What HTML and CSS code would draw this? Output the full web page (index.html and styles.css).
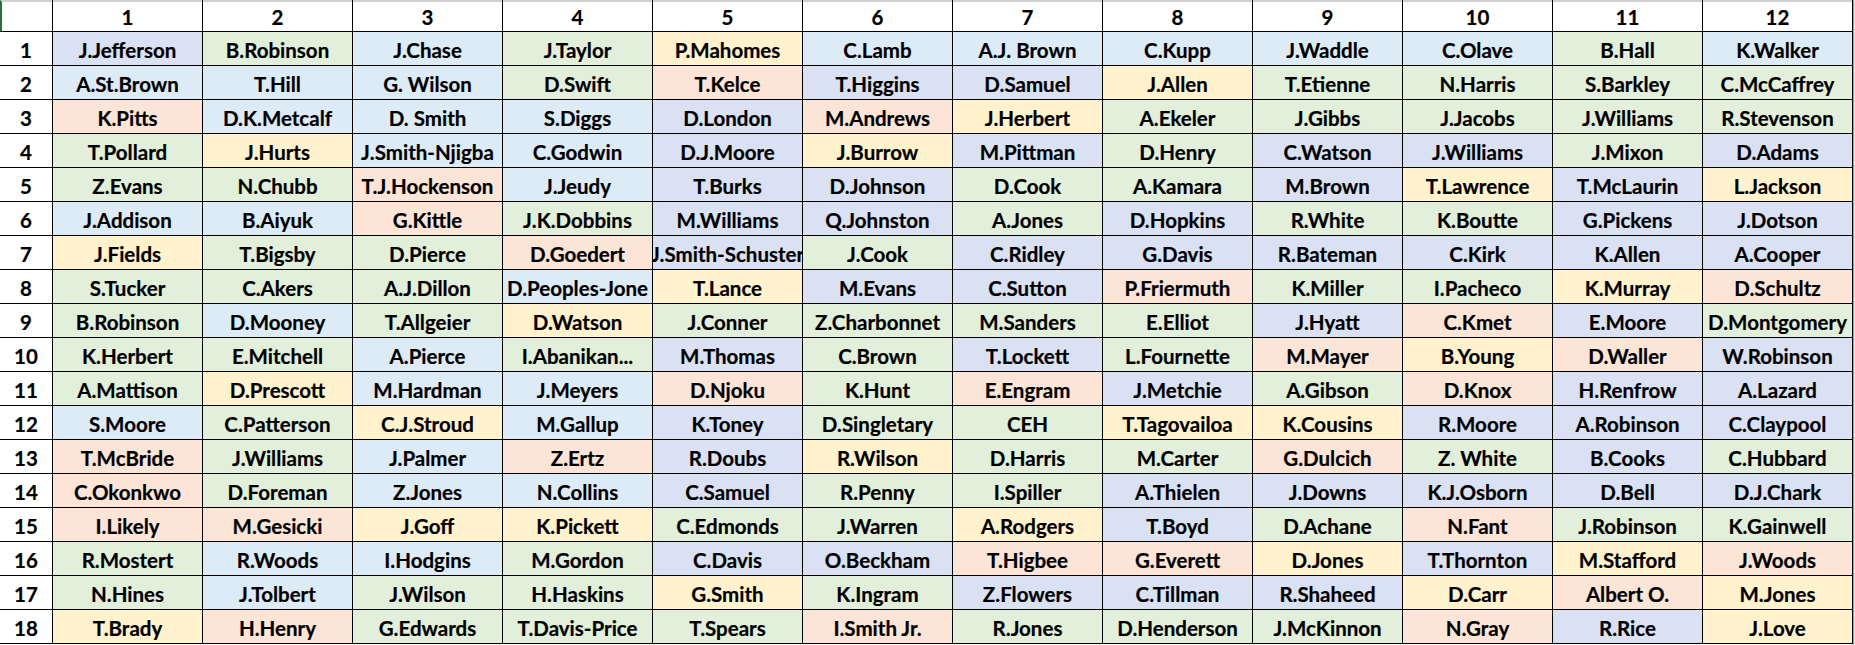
FILE: index.html
```html
<!DOCTYPE html>
<html>
<head>
<meta charset="utf-8">
<link rel="stylesheet" href="styles.css">
</head>
<body>
<div class="wrap">
<div class="sheet">
<div class="c h corner"></div><div class="c h">1</div><div class="c h">2</div><div class="c h">3</div><div class="c h">4</div><div class="c h">5</div><div class="c h">6</div><div class="c h">7</div><div class="c h">8</div><div class="c h">9</div><div class="c h">10</div><div class="c h">11</div><div class="c h">12</div>
<div class="c rh">1</div><div class="c p">J.Jefferson</div><div class="c g">B.Robinson</div><div class="c b">J.Chase</div><div class="c g">J.Taylor</div><div class="c y">P.Mahomes</div><div class="c b">C.Lamb</div><div class="c b">A.J. Brown</div><div class="c b">C.Kupp</div><div class="c b">J.Waddle</div><div class="c b">C.Olave</div><div class="c g">B.Hall</div><div class="c b">K.Walker</div>
<div class="c rh">2</div><div class="c b">A.St.Brown</div><div class="c b">T.Hill</div><div class="c b">G. Wilson</div><div class="c g">D.Swift</div><div class="c o">T.Kelce</div><div class="c p">T.Higgins</div><div class="c p">D.Samuel</div><div class="c y">J.Allen</div><div class="c g">T.Etienne</div><div class="c g">N.Harris</div><div class="c g">S.Barkley</div><div class="c g">C.McCaffrey</div>
<div class="c rh">3</div><div class="c o">K.Pitts</div><div class="c b">D.K.Metcalf</div><div class="c b">D. Smith</div><div class="c b">S.Diggs</div><div class="c p">D.London</div><div class="c o">M.Andrews</div><div class="c y">J.Herbert</div><div class="c g">A.Ekeler</div><div class="c g">J.Gibbs</div><div class="c g">J.Jacobs</div><div class="c g">J.Williams</div><div class="c g">R.Stevenson</div>
<div class="c rh">4</div><div class="c g">T.Pollard</div><div class="c y">J.Hurts</div><div class="c b">J.Smith-Njigba</div><div class="c b">C.Godwin</div><div class="c p">D.J.Moore</div><div class="c y">J.Burrow</div><div class="c p">M.Pittman</div><div class="c g">D.Henry</div><div class="c p">C.Watson</div><div class="c p">J.Williams</div><div class="c g">J.Mixon</div><div class="c p">D.Adams</div>
<div class="c rh">5</div><div class="c g">Z.Evans</div><div class="c g">N.Chubb</div><div class="c o">T.J.Hockenson</div><div class="c b">J.Jeudy</div><div class="c p">T.Burks</div><div class="c p">D.Johnson</div><div class="c g">D.Cook</div><div class="c g">A.Kamara</div><div class="c p">M.Brown</div><div class="c y">T.Lawrence</div><div class="c p">T.McLaurin</div><div class="c y">L.Jackson</div>
<div class="c rh">6</div><div class="c b">J.Addison</div><div class="c b">B.Aiyuk</div><div class="c o">G.Kittle</div><div class="c g">J.K.Dobbins</div><div class="c p">M.Williams</div><div class="c p">Q.Johnston</div><div class="c g">A.Jones</div><div class="c p">D.Hopkins</div><div class="c g">R.White</div><div class="c g">K.Boutte</div><div class="c p">G.Pickens</div><div class="c p">J.Dotson</div>
<div class="c rh">7</div><div class="c y">J.Fields</div><div class="c g">T.Bigsby</div><div class="c g">D.Pierce</div><div class="c o">D.Goedert</div><div class="c p">J.Smith-Schuster</div><div class="c g">J.Cook</div><div class="c p">C.Ridley</div><div class="c p">G.Davis</div><div class="c p">R.Bateman</div><div class="c p">C.Kirk</div><div class="c p">K.Allen</div><div class="c p">A.Cooper</div>
<div class="c rh">8</div><div class="c g">S.Tucker</div><div class="c g">C.Akers</div><div class="c g">A.J.Dillon</div><div class="c b">D.Peoples-Jone</div><div class="c y">T.Lance</div><div class="c p">M.Evans</div><div class="c p">C.Sutton</div><div class="c o">P.Friermuth</div><div class="c g">K.Miller</div><div class="c g">I.Pacheco</div><div class="c y">K.Murray</div><div class="c o">D.Schultz</div>
<div class="c rh">9</div><div class="c g">B.Robinson</div><div class="c b">D.Mooney</div><div class="c g">T.Allgeier</div><div class="c y">D.Watson</div><div class="c g">J.Conner</div><div class="c g">Z.Charbonnet</div><div class="c g">M.Sanders</div><div class="c g">E.Elliot</div><div class="c p">J.Hyatt</div><div class="c o">C.Kmet</div><div class="c p">E.Moore</div><div class="c g">D.Montgomery</div>
<div class="c rh">10</div><div class="c g">K.Herbert</div><div class="c g">E.Mitchell</div><div class="c b">A.Pierce</div><div class="c g">I.Abanikan...</div><div class="c p">M.Thomas</div><div class="c g">C.Brown</div><div class="c p">T.Lockett</div><div class="c g">L.Fournette</div><div class="c o">M.Mayer</div><div class="c y">B.Young</div><div class="c o">D.Waller</div><div class="c p">W.Robinson</div>
<div class="c rh">11</div><div class="c g">A.Mattison</div><div class="c y">D.Prescott</div><div class="c b">M.Hardman</div><div class="c b">J.Meyers</div><div class="c o">D.Njoku</div><div class="c g">K.Hunt</div><div class="c o">E.Engram</div><div class="c p">J.Metchie</div><div class="c g">A.Gibson</div><div class="c o">D.Knox</div><div class="c p">H.Renfrow</div><div class="c p">A.Lazard</div>
<div class="c rh">12</div><div class="c b">S.Moore</div><div class="c g">C.Patterson</div><div class="c y">C.J.Stroud</div><div class="c b">M.Gallup</div><div class="c p">K.Toney</div><div class="c g">D.Singletary</div><div class="c g">CEH</div><div class="c y">T.Tagovailoa</div><div class="c y">K.Cousins</div><div class="c p">R.Moore</div><div class="c p">A.Robinson</div><div class="c p">C.Claypool</div>
<div class="c rh">13</div><div class="c o">T.McBride</div><div class="c g">J.Williams</div><div class="c b">J.Palmer</div><div class="c o">Z.Ertz</div><div class="c p">R.Doubs</div><div class="c y">R.Wilson</div><div class="c g">D.Harris</div><div class="c g">M.Carter</div><div class="c o">G.Dulcich</div><div class="c g">Z. White</div><div class="c p">B.Cooks</div><div class="c g">C.Hubbard</div>
<div class="c rh">14</div><div class="c o">C.Okonkwo</div><div class="c g">D.Foreman</div><div class="c b">Z.Jones</div><div class="c b">N.Collins</div><div class="c p">C.Samuel</div><div class="c g">R.Penny</div><div class="c g">I.Spiller</div><div class="c p">A.Thielen</div><div class="c p">J.Downs</div><div class="c p">K.J.Osborn</div><div class="c p">D.Bell</div><div class="c p">D.J.Chark</div>
<div class="c rh">15</div><div class="c o">I.Likely</div><div class="c o">M.Gesicki</div><div class="c y">J.Goff</div><div class="c y">K.Pickett</div><div class="c g">C.Edmonds</div><div class="c g">J.Warren</div><div class="c y">A.Rodgers</div><div class="c p">T.Boyd</div><div class="c g">D.Achane</div><div class="c o">N.Fant</div><div class="c g">J.Robinson</div><div class="c g">K.Gainwell</div>
<div class="c rh">16</div><div class="c g">R.Mostert</div><div class="c b">R.Woods</div><div class="c b">I.Hodgins</div><div class="c g">M.Gordon</div><div class="c p">C.Davis</div><div class="c p">O.Beckham</div><div class="c o">T.Higbee</div><div class="c o">G.Everett</div><div class="c y">D.Jones</div><div class="c p">T.Thornton</div><div class="c y">M.Stafford</div><div class="c o">J.Woods</div>
<div class="c rh">17</div><div class="c g">N.Hines</div><div class="c b">J.Tolbert</div><div class="c g">J.Wilson</div><div class="c g">H.Haskins</div><div class="c y">G.Smith</div><div class="c g">K.Ingram</div><div class="c p">Z.Flowers</div><div class="c p">C.Tillman</div><div class="c p">R.Shaheed</div><div class="c y">D.Carr</div><div class="c o">Albert O.</div><div class="c y">M.Jones</div>
<div class="c rh">18</div><div class="c y">T.Brady</div><div class="c o">H.Henry</div><div class="c g">G.Edwards</div><div class="c g">T.Davis-Price</div><div class="c g">T.Spears</div><div class="c o">I.Smith Jr.</div><div class="c g">R.Jones</div><div class="c g">D.Henderson</div><div class="c g">J.McKinnon</div><div class="c o">N.Gray</div><div class="c p">R.Rice</div><div class="c y">J.Love</div>
</div>
<div class="edge"></div>
</div>
</body>
</html>
```
FILE: styles.css
```css
html, body {
  margin: 0;
  padding: 0;
  background: #ffffff;
}
body {
  font-family: "Lato", "Liberation Sans", sans-serif;
  font-weight: 700;
  color: #000;
}
.wrap {
  display: flex;
  width: 1855px;
  height: 645px;
  overflow: hidden;
}
.sheet {
  display: grid;
  grid-template-columns: 52px repeat(12, 149px);
  grid-template-rows: 31px repeat(18, 33px);
  gap: 1px;
  background: #000;
  border-right: 1px solid #000;
  border-bottom: 1px solid #000;
  align-self: flex-start;
}
.edge {
  flex: 1;
  background: #e6e6e6;
  border-left: 1px solid #a0a0a0;
}
.c {
  display: flex;
  align-items: center;
  justify-content: center;
  overflow: hidden;
  white-space: nowrap;
  font-size: 20.5px;
  line-height: 1;
  padding-top: 4px;
  box-sizing: border-box;
  -webkit-text-stroke: 0.2px #000;
}
.h {
  background: #fff;
  border-top: 2px solid #d0d0d0;
  padding-top: 1px;
}
.corner {
  border-left: 2px solid #217346;
}
.rh { background: #fff; }
.p { background: #d9e1f2; }
.b { background: #ddebf7; }
.g { background: #e2efda; }
.o { background: #fce4d6; }
.y { background: #fff2cc; }
```
